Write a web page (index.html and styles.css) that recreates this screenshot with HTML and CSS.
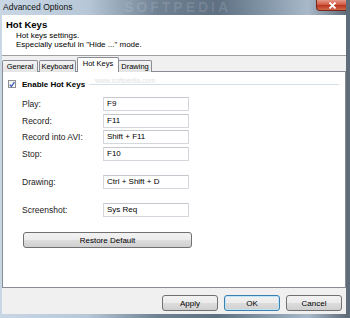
FILE: index.html
```html
<!DOCTYPE html>
<html lang="en">
<head>
    <meta charset="UTF-8">
    <title>Advanced Options</title>
    <link rel="stylesheet" href="styles.css">
</head>
<body>
    <div class="window">
        <div class="titlebar">
            <span class="title">Advanced Options</span>
            <span class="watermark">SOFTPEDIA</span>
            <span class="close">
                <svg width="9" height="7" viewBox="0 0 9 7"><path d="M1.5 0.5 L7.5 6.5 M7.5 0.5 L1.5 6.5" stroke="#fff" stroke-width="1.8"/></svg>
            </span>
        </div>

        <div class="client">
            <div class="header">
                <h1>Hot Keys</h1>
                <p>Hot keys settings.<br>Especially useful in "Hide ..." mode.</p>
            </div>

            <div class="tabs">
                <span class="tab tab-general">General</span>
                <span class="tab tab-keyboard">Keyboard</span>
                <span class="tab tab-hotkeys active">Hot Keys</span>
                <span class="tab tab-drawing">Drawing</span>
            </div>

            <div class="panel">
                <div class="group-title">
                    <span class="check">
                        <svg width="7" height="7" viewBox="0 0 7 7"><path d="M0.8 3.6 L2.8 5.8 L6.3 0.8" fill="none" stroke="#2a4fb0" stroke-width="1.4"/></svg>
                    </span>
                    <span class="group-text">Enable Hot Keys</span>
                    <span class="group-watermark">www.softpedia.com</span>
                    <span class="rule"></span>
                </div>

                <div class="keys">
                    <div class="row"><span class="label">Play:</span><span class="key">F9</span></div>
                    <div class="row"><span class="label">Record:</span><span class="key">F11</span></div>
                    <div class="row"><span class="label">Record into AVI:</span><span class="key">Shift + F11</span></div>
                    <div class="row"><span class="label">Stop:</span><span class="key">F10</span></div>
                    <div class="row spaced"><span class="label">Drawing:</span><span class="key">Ctrl + Shift + D</span></div>
                    <div class="row spaced"><span class="label">Screenshot:</span><span class="key">Sys Req</span></div>
                </div>

                <button class="restore">Restore Default</button>
            </div>

            <div class="footer">
                <button class="btn">Apply</button>
                <button class="btn default">OK</button>
                <button class="btn">Cancel</button>
            </div>
        </div>
    </div>
</body>
</html>
```

FILE: styles.css
```css
body {
    margin: 0;
    padding: 0;
    font-family: "Liberation Sans", Arial, sans-serif;
    color: #000;
    overflow: hidden;
}
.window {
    width: 350px;
    height: 318px;
    box-sizing: border-box;
    padding: 0 4px 4px 2px;
    background: linear-gradient(to right, #c9d7e5 0%, #b7c7d7 25%, #6f8193 45%, #5e7082 62%, #8094a6 75%, #a9b9c9 88%, #5f6c79 99%);
    display: flex;
    flex-direction: column;
}
.titlebar {
    height: 15px;
    display: flex;
    align-items: flex-start;
    position: relative;
    overflow: hidden;
}
.title {
    font-size: 8.5px;
    padding: 2px 0 0 1px;
    color: #111;
}
.watermark {
    position: absolute;
    left: 122px;
    top: 0;
    font-size: 14px;
    line-height: 15px;
    font-weight: bold;
    letter-spacing: 3px;
    color: rgba(255, 255, 255, 0.12);
}
.close {
    margin-left: auto;
    margin-right: -2px;
    width: 32px;
    height: 11px;
    box-sizing: border-box;
    border: 1px solid #7a2418;
    border-top: 0;
    border-radius: 0 0 4px 4px;
    background: linear-gradient(#e49a8a, #d2553e 50%, #b9321c 51%, #d06a4c);
    display: flex;
    align-items: center;
    justify-content: center;
}
.client {
    flex: 1;
    background-color: #f0f0f0;
    display: flex;
    flex-direction: column;
}
.header {
    height: 41px;
    background-color: #fff;
    border-bottom: 1px solid #a0a0a0;
    box-sizing: border-box;
    padding: 4px 0 0 4px;
}
.header h1 {
    margin: 0;
    font-size: 9.5px;
    font-weight: bold;
    line-height: 11px;
}
.header p {
    margin: 1px 0 0 10px;
    font-size: 8px;
    line-height: 9px;
}
.tabs {
    height: 16px;
    display: flex;
    align-items: flex-end;
    padding-top: 1px;
    box-sizing: border-box;
    position: relative;
    z-index: 1;
    margin-bottom: -1px;
}
.tab {
    height: 12px;
    box-sizing: border-box;
    text-align: center;
    font-size: 7.5px;
    line-height: 11px;
    border: 1px solid #898c95;
    border-bottom: 0;
    border-radius: 2px 2px 0 0;
    background: linear-gradient(#f4f4f4, #e4e4e4);
    margin-right: 1px;
}
.tab-general {
    width: 36px;
}
.tab-keyboard {
    width: 37px;
}
.tab-hotkeys {
    width: 42px;
}
.tab-drawing {
    width: 34px;
}
.tab.active {
    height: 15px;
    background: #fff;
    margin: 0 -1px 0 0;
    line-height: 12px;
    position: relative;
    z-index: 2;
}
.panel {
    height: 217px;
    background-color: #fff;
    border: 1px solid #898c95;
    box-sizing: border-box;
    padding: 8px 0 0 0;
}
.group-title {
    display: flex;
    align-items: center;
    height: 8px;
    padding-left: 5px;
    position: relative;
}
.check {
    width: 8px;
    height: 8px;
    box-sizing: border-box;
    border: 1px solid #8e8f8f;
    background: linear-gradient(#f0f0f0, #fff);
    display: flex;
    align-items: center;
    justify-content: center;
}
.group-text {
    font-size: 8px;
    font-weight: bold;
    margin-left: 6px;
}
.group-watermark {
    position: absolute;
    left: 92px;
    top: -3px;
    font-size: 7px;
    color: #e2e2e2;
}
.rule {
    flex: 1;
    height: 1px;
    margin: 0 6px 0 4px;
    background-color: #d5dfe5;
}
.keys {
    padding: 9px 0 0 19px;
}
.row {
    display: flex;
    align-items: center;
    height: 14px;
    margin-bottom: 2.7px;
}
.row.spaced {
    margin-top: 14px;
}
.label {
    width: 81px;
    font-size: 8.5px;
    color: #1a1a1a;
}
.key {
    width: 86px;
    height: 14px;
    box-sizing: border-box;
    border: 1px solid #d4d8de;
    border-top-color: #c4c8ce;
    padding-left: 3px;
    font-size: 8px;
    line-height: 12px;
}
.restore {
    display: block;
    margin: 15px 0 0 20px;
    width: 169px;
    height: 16px;
    padding: 0;
    border: 1px solid #707070;
    border-radius: 3px;
    background: linear-gradient(#f2f2f2 0%, #ebebeb 50%, #dddddd 51%, #cfcfcf 100%);
    font-family: "Liberation Sans", Arial, sans-serif;
    font-size: 8px;
    color: #000;
}
.footer {
    flex: 1;
    display: flex;
    justify-content: flex-end;
    align-items: flex-start;
    gap: 6px;
    padding: 7px 4px 0 0;
}
.btn {
    width: 56px;
    height: 16px;
    padding: 0;
    border: 1px solid #707070;
    border-radius: 3px;
    background: linear-gradient(#f2f2f2 0%, #ebebeb 50%, #dddddd 51%, #cfcfcf 100%);
    font-family: "Liberation Sans", Arial, sans-serif;
    font-size: 8px;
    color: #000;
}
.btn.default {
    border-color: #3c7fb1;
    box-shadow: inset 0 0 0 1px #bfe6f7;
}
```
